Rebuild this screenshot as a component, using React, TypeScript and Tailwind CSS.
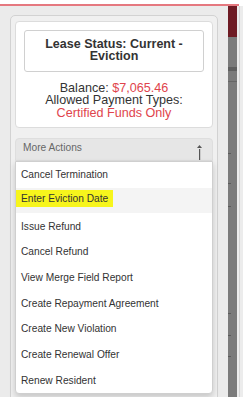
const actions = [
  "Cancel Termination",
  "Enter Eviction Date",
  "Issue Refund",
  "Cancel Refund",
  "View Merge Field Report",
  "Create Repayment Agreement",
  "Create New Violation",
  "Create Renewal Offer",
  "Renew Resident",
];

function Caret() {
  return (
    <svg width="7" height="16" viewBox="0 0 7 16" className="shrink-0">
      <path d="M1 4 L3.5 1 L6 4 Z" fill="#555" />
      <rect x="3" y="5" width="1.2" height="11" fill="#555" />
    </svg>
  );
}

function ActionMenu() {
  return (
    <ul className="absolute left-0 right-0 top-[23px] z-10 bg-white border border-[#cfcfcf] rounded-b-[4px] shadow-[0_3px_6px_rgba(0,0,0,0.18)]">
      {actions.map((a, i) => (
        <li
          key={a}
          className={`h-[25.7px] flex items-center text-[10.2px] text-[#333] ${i === 1 ? "bg-[#f4f4f4]" : ""}`}
        >
          {i === 1 ? (
            <span className="bg-[#f7f51c] h-[17px] -mt-[4px] flex items-center px-[5px]">{a}</span>
          ) : (
            <span className="px-[5px]">{a}</span>
          )}
        </li>
      ))}
    </ul>
  );
}

function Strip() {
  return (
    <div className="w-[9px] flex flex-col">
      <div className="h-[31px] bg-[#6e1b24]" />
      <div className="flex-1 bg-[#7b7b7b] flex flex-col">
        <div className="h-[30px]" />
        <div className="h-[4px] bg-[#5f5f5f]" />
        <div className="h-[10px]" />
        <div className="h-px bg-[#666]" />
        <div className="h-[71px]" />
        <div className="h-px w-[3px] bg-[#5a5a5a]" />
        <div className="h-[29px]" />
        <div className="h-px w-[3px] bg-[#5a5a5a]" />
        <div className="h-[22px]" />
        <div className="h-px w-[3px] bg-[#5a5a5a]" />
        <div className="h-[106px]" />
        <div className="h-px w-[3px] bg-[#5a5a5a]" />
        <div className="h-[21px]" />
        <div className="h-px w-[3px] bg-[#5a5a5a]" />
        <div className="h-[20px]" />
        <div className="h-px w-[3px] bg-[#5a5a5a]" />
      </div>
    </div>
  );
}

export default function App() {
  return (
    <div className="w-[243px] h-[397px] overflow-hidden bg-white flex flex-col font-['Liberation_Sans',Arial,sans-serif]">
      <div className="h-[4px] shrink-0" />
      <div className="h-[1.5px] w-[239px] bg-[#e5787f] shrink-0" />
      <div className="flex-1 flex min-h-0">
        <div className="w-[228px] bg-[#ebebeb] pl-[10px] pr-[10px] pt-[9px]">
          <div className="h-[400px] border border-[#d2d2d2] rounded-[5px] bg-[#f0f0f0] px-[4px] pt-[5px]">
            <div className="bg-white border border-[#dcdcdc] rounded-[4px] px-[8px] pt-[8px] pb-[8px]">
              <div className="h-[42px] border border-[#d0d0d0] rounded-[3px] flex items-center justify-center px-[10px]">
                <p className="text-center font-bold text-[12.5px] leading-[11.5px] text-[#333]">
                  Lease Status: Current - Eviction
                </p>
              </div>
              <div className="mt-[10px] text-center text-[12.6px] leading-[12.5px] text-[#333]">
                <p>
                  Balance: <span className="text-[#e0444c]">$7,065.46</span>
                </p>
                <p>Allowed Payment Types:</p>
                <p className="text-[#e0444c]">Certified Funds Only</p>
              </div>
            </div>
            <div className="relative mt-[10px]">
              <div className="h-[23px] bg-[#e6e6e6] rounded-t-[4px] border border-[#dedede] flex items-end justify-between pl-[7px] pr-[9px]">
                <span className="text-[10.2px] text-[#666] mb-[5px]">More Actions</span>
                <Caret />
              </div>
              <ActionMenu />
              <div className="mt-[10px] h-[30px] bg-[#e6e6e6] border border-[#dcdcdc] rounded-[4px]" />
            </div>
          </div>
        </div>
        <Strip />
        <div className="flex-1 bg-[#ececec] flex">
          <div className="w-[2px]" />
          <div className="w-px bg-[#d4d4d4]" />
        </div>
      </div>
    </div>
  );
}
